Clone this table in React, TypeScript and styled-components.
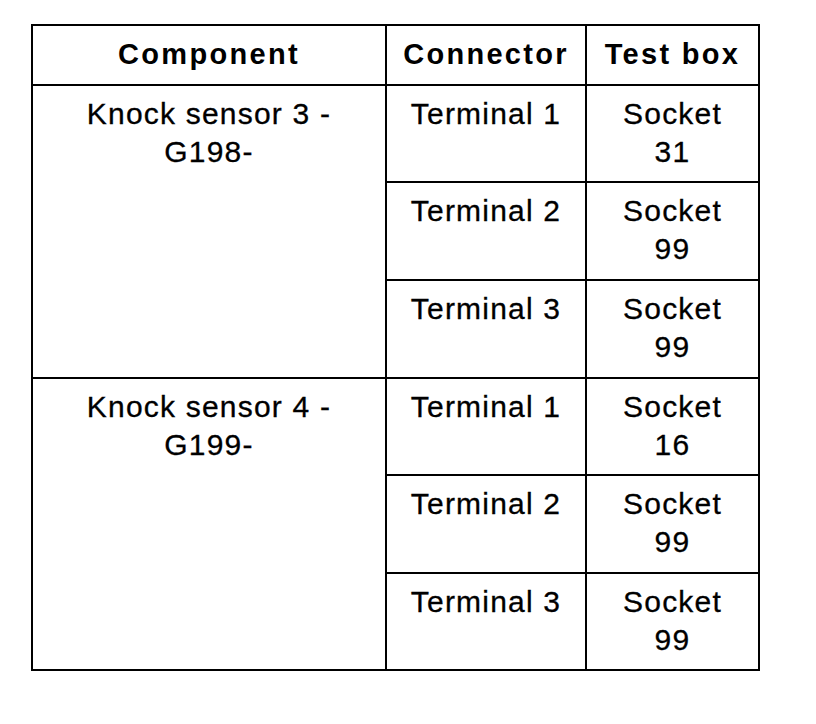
import styled, { createGlobalStyle } from 'styled-components';

const GlobalStyle = createGlobalStyle`
  html, body {
    margin: 0;
    padding: 0;
    background: #ffffff;
  }
`;

const Page = styled.main`
  padding: 24px 0 0 31px;
  font-family: 'Liberation Sans', Arial, sans-serif;
  color: #000000;
`;

const Table = styled.div`
  display: grid;
  grid-template-columns: 352px 198px 171px;
  grid-template-rows: 58px 95px 96px 96px 95px 96px 95px;
  gap: 2px;
  padding: 2px;
  width: max-content;
  background: #000000;
`;

const HeadCell = styled.div`
  display: flex;
  align-items: center;
  justify-content: center;
  padding-bottom: 2px;
  box-sizing: border-box;
  background: #ffffff;
  font-size: 29px;
  font-weight: 700;
  letter-spacing: 2.3px;
  line-height: 32px;
`;

const Cell = styled.div<{ $span?: number }>`
  grid-row: ${({ $span }) => ($span ? `span ${$span}` : 'auto')};
  padding-top: 9px;
  box-sizing: border-box;
  background: #ffffff;
  text-align: center;
  font-size: 30px;
  letter-spacing: 1.2px;
  line-height: 38px;
  -webkit-text-stroke: 0.3px #000000;
`;

type Pin = { terminal: string; socket: string };
type Sensor = { name: string; code: string; pins: Pin[] };

const sensors: Sensor[] = [
  {
    name: 'Knock sensor 3 -',
    code: 'G198-',
    pins: [
      { terminal: 'Terminal 1', socket: '31' },
      { terminal: 'Terminal 2', socket: '99' },
      { terminal: 'Terminal 3', socket: '99' },
    ],
  },
  {
    name: 'Knock sensor 4 -',
    code: 'G199-',
    pins: [
      { terminal: 'Terminal 1', socket: '16' },
      { terminal: 'Terminal 2', socket: '99' },
      { terminal: 'Terminal 3', socket: '99' },
    ],
  },
];

export default function App() {
  return (
    <>
      <GlobalStyle />
      <Page>
        <Table>
          <HeadCell>Component</HeadCell>
          <HeadCell>Connector</HeadCell>
          <HeadCell>Test box</HeadCell>
          {sensors.map((s) =>
            s.pins.map((p, i) => (
              <>
                {i === 0 && (
                  <Cell $span={s.pins.length}>
                    {s.name}
                    <br />
                    {s.code}
                  </Cell>
                )}
                <Cell>{p.terminal}</Cell>
                <Cell>
                  Socket
                  <br />
                  {p.socket}
                </Cell>
              </>
            ))
          )}
        </Table>
      </Page>
    </>
  );
}
